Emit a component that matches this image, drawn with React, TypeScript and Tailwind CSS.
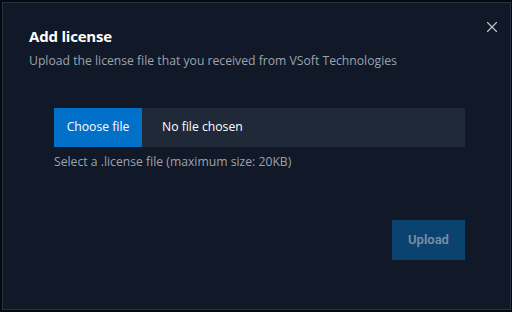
import { X } from "lucide-react"

export default function App() {
  return (
    <div className="w-[512px] h-[312px] bg-[#05080d] pt-[2px] pl-[2px] pr-[1px] pb-[2px]" style={{ fontFamily: '"Open Sans", "Noto Sans", sans-serif' }}>
      <div className="relative h-full border border-[#273142] bg-[#111827] px-[26px] pt-[23px]">
        <button className="absolute right-[9px] top-[15px] text-[#c4c9d1]">
          <X size={18} strokeWidth={1.5} />
        </button>
        <h2 className="text-[15px] font-bold text-white leading-[20px] tracking-[-0.2px]">Add license</h2>
        <p className="mt-[6px] text-[12.2px] leading-[18px] text-[#9ca3af]">
          Upload the license file that you received from VSoft Technologies
        </p>

        <div className="mt-[38px] ml-[25px] mr-[19px]">
          <div className="flex h-[39px] items-center bg-[#1f2937]">
            <div className="flex h-full w-[88px] items-center justify-center bg-[#0070c9] text-[12.2px] text-white">
              Choose file
            </div>
            <span className="ml-[20px] text-[12.2px] text-white">No file chosen</span>
          </div>
          <p className="mt-[6px] text-[12.2px] leading-[18px] text-[#9ca3af]">
            Select a .license file (maximum size: 20KB)
          </p>
        </div>

        <div className="mt-[49px] mr-[19px] flex justify-end">
          <button className="h-[40px] w-[73px] bg-[#0a4270] text-[13px] font-semibold text-[#7b8ea5]" style={{ fontFamily: 'Roboto, sans-serif' }}>
            Upload
          </button>
        </div>
      </div>
    </div>
  )
}
